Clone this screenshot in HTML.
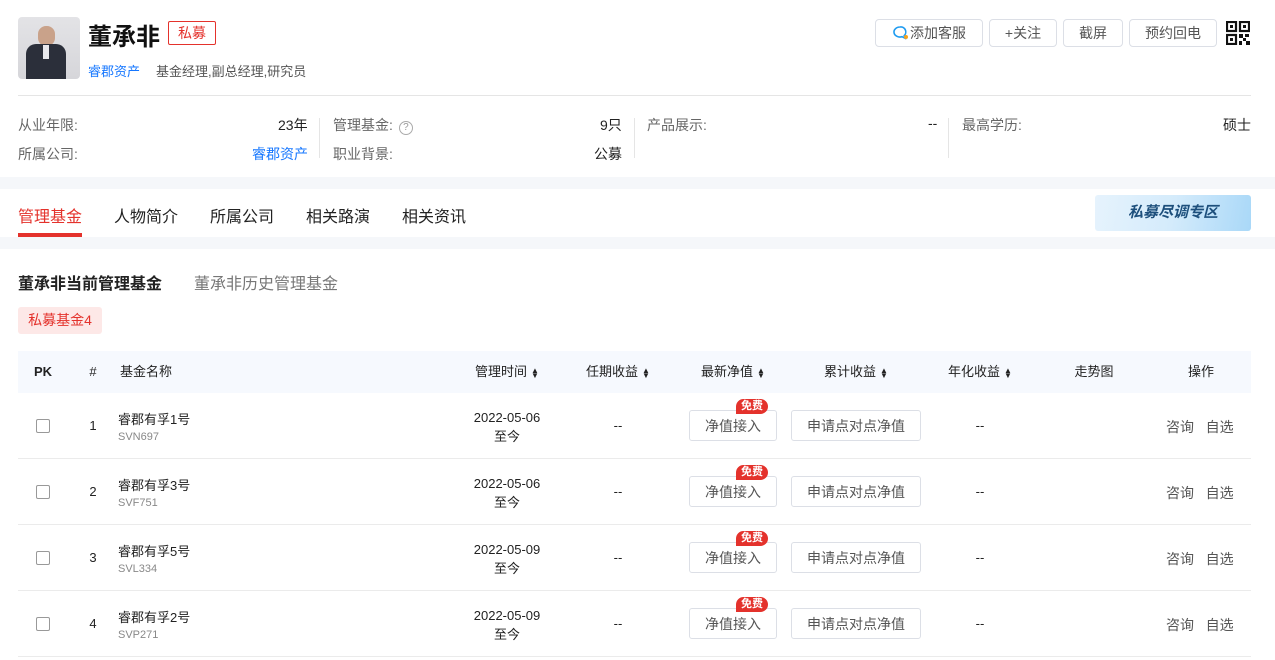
<!DOCTYPE html><html><head><meta charset="utf-8"><style>
*{margin:0;padding:0;box-sizing:border-box}
body{width:1275px;height:660px;overflow:hidden;background:#fff;font-family:"Liberation Sans","Noto Sans CJK SC",sans-serif;color:#333;position:relative}
.a{position:absolute;white-space:nowrap}
.btn{position:absolute;top:19px;height:28px;border:1px solid #dcdfe6;border-radius:4px;font-size:14px;color:#555;display:flex;align-items:center;justify-content:center}
.lbl{font-size:14px;color:#666}
.val{font-size:14px;color:#222}
.vs{position:absolute;width:1px;background:#e5e5e5}
.th{position:absolute;top:351px;height:42px;line-height:42px;font-size:13px;color:#222;transform:translateX(-50%);white-space:nowrap}
.sort{display:inline-block;font-size:8px;line-height:5px;vertical-align:middle;margin-left:4px}
.c{position:absolute;transform:translateX(-50%);white-space:nowrap;font-size:13px;color:#222;text-align:center}
.ob{position:absolute;height:31px;border:1px solid #dcdfe6;border-radius:3px;font-size:14px;color:#555;display:flex;align-items:center;justify-content:center}
.free{position:absolute;background:#e4322c;color:#fff;font-size:11px;font-weight:bold;border-radius:8px 8px 8px 0;height:15px;line-height:15px;padding:0 5px}
</style></head><body>
<div class="a" style="left:18px;top:17px;width:62px;height:62px;border-radius:4px;background:linear-gradient(#e3e3e6,#d6d6da);overflow:hidden">
 <div style="position:absolute;left:20px;top:9px;width:17px;height:20px;border-radius:8px;background:#c9a28a"></div>
 <div style="position:absolute;left:8px;top:27px;width:40px;height:40px;border-radius:10px 10px 0 0;background:#2b2f3a"></div>
 <div style="position:absolute;left:25px;top:28px;width:6px;height:14px;background:#e8e8ec"></div>
</div>
<div class="a" style="left:88px;top:17px;font-size:24px;font-weight:bold;color:#111">董承非</div>
<div class="a" style="left:168px;top:21px;width:48px;height:24px;border:1px solid #e4322c;border-radius:2px;color:#e4322c;font-size:14px;text-align:center;line-height:22px">私募</div>
<div class="a" style="left:88px;top:61px;font-size:13px;color:#1677ff">睿郡资产</div>
<div class="a" style="left:156px;top:61px;font-size:13px;color:#555">基金经理,副总经理,研究员</div>
<div class="btn" style="left:875px;width:108px"><svg width="18" height="16" viewBox="0 0 18 16"><path d="M8 2a6 5 0 1 0 2 9.7l3 1.5-.8-2.6A5 5 0 0 0 8 2z" fill="none" stroke="#1e9bf0" stroke-width="1.6"/><circle cx="14" cy="12" r="2" fill="#f7a21b"/></svg>添加客服</div>
<div class="btn" style="left:989px;width:68px">+关注</div>
<div class="btn" style="left:1063px;width:60px">截屏</div>
<div class="btn" style="left:1129px;width:88px">预约回电</div>
<svg class="a" style="left:1226px;top:21px" width="24" height="24" viewBox="0 0 24 24"><g fill="none" stroke="#111" stroke-width="2.2"><rect x="1" y="1" width="9" height="9"/><rect x="14" y="1" width="9" height="9"/><rect x="1" y="14" width="9" height="9"/></g><g fill="#111"><rect x="4" y="4" width="3" height="3"/><rect x="17" y="4" width="3" height="3"/><rect x="4" y="17" width="3" height="3"/><rect x="13" y="13" width="4" height="4"/><rect x="19" y="13" width="4" height="3"/><rect x="17" y="17" width="3" height="3"/><rect x="13" y="20" width="3" height="4"/><rect x="20" y="20" width="4" height="4"/></g></svg>
<div class="a" style="left:18px;top:95px;width:1233px;height:1px;background:#e5e5e5"></div>
<div class="a lbl" style="left:18px;top:115px">从业年限:</div><div class="a val" style="left:278px;top:115px">23年</div>
<div class="a lbl" style="left:18px;top:144px">所属公司:</div><div class="a val" style="left:252px;top:144px;color:#1677ff">睿郡资产</div>
<div class="vs" style="left:319px;top:118px;height:40px"></div>
<div class="a lbl" style="left:333px;top:115px">管理基金:<span style="display:inline-block;width:14px;height:14px;border:1px solid #aaa;border-radius:50%;font-size:10px;line-height:12px;text-align:center;color:#999;margin-left:6px">?</span></div><div class="a val" style="left:600px;top:115px">9只</div>
<div class="a lbl" style="left:333px;top:144px">职业背景:</div><div class="a val" style="left:594px;top:144px">公募</div>
<div class="vs" style="left:634px;top:118px;height:40px"></div>
<div class="a lbl" style="left:647px;top:115px">产品展示:</div><div class="a val" style="left:928px;top:115px">--</div>
<div class="vs" style="left:948px;top:118px;height:40px"></div>
<div class="a lbl" style="left:962px;top:115px">最高学历:</div><div class="a val" style="left:1223px;top:115px">硕士</div>
<div class="a" style="left:0;top:177px;width:1275px;height:12px;background:#f5f7fa"></div>
<div class="a" style="left:18px;top:203px;font-size:16px;color:#e4322c">管理基金</div>
<div class="a" style="left:18px;top:233px;width:64px;height:4px;background:#e4322c"></div>
<div class="a" style="left:114px;top:203px;font-size:16px;color:#222">人物简介</div>
<div class="a" style="left:210px;top:203px;font-size:16px;color:#222">所属公司</div>
<div class="a" style="left:306px;top:203px;font-size:16px;color:#222">相关路演</div>
<div class="a" style="left:402px;top:203px;font-size:16px;color:#222">相关资讯</div>
<div class="a" style="left:1095px;top:195px;width:156px;height:36px;border-radius:3px;background:linear-gradient(100deg,#e6f3fd 0%,#d4ebfb 50%,#a9d8f8 100%);text-align:center;line-height:36px;font-size:15px;font-weight:bold;font-style:italic;color:#1d4f7c">私募尽调专区</div>
<div class="a" style="left:0;top:237px;width:1275px;height:12px;background:#f5f7fa"></div>
<div class="a" style="left:18px;top:270px;font-size:16px;font-weight:bold;color:#222">董承非当前管理基金</div>
<div class="a" style="left:194px;top:270px;font-size:16px;color:#777">董承非历史管理基金</div>
<div class="a" style="left:18px;top:307px;width:84px;height:27px;background:#fde8e7;border-radius:3px;color:#e4322c;font-size:14px;text-align:center;line-height:27px">私募基金4</div>
<div class="a" style="left:18px;top:351px;width:1233px;height:42px;background:#f6f9fe"></div>
<div class="th" style="left:43px;font-weight:bold">PK</div>
<div class="th" style="left:93px">#</div>
<div class="th" style="left:146px">基金名称</div>
<div class="th" style="left:507px">管理时间<span class="sort">▲<br>▼</span></div>
<div class="th" style="left:618px">任期收益<span class="sort">▲<br>▼</span></div>
<div class="th" style="left:733px">最新净值<span class="sort">▲<br>▼</span></div>
<div class="th" style="left:856px">累计收益<span class="sort">▲<br>▼</span></div>
<div class="th" style="left:980px">年化收益<span class="sort">▲<br>▼</span></div>
<div class="th" style="left:1094px">走势图</div>
<div class="th" style="left:1201px">操作</div>

<div class="a" style="left:0;top:393px">
<div class="a" style="left:36px;top:26px;width:14px;height:14px;border:1px solid #999;border-radius:2px"></div>
<div class="c" style="left:93px;top:25px">1</div>
<div class="a" style="left:118px;top:16px;font-size:13px;color:#222">睿郡有孚1号</div>
<div class="a" style="left:118px;top:38px;font-size:11px;color:#888">SVN697</div>
<div class="c" style="left:507px;top:15px;line-height:19px">2022-05-06<br>至今</div>
<div class="c" style="left:618px;top:25px">--</div>
<div class="ob" style="left:689px;top:17px;width:88px">净值接入</div><div class="free" style="left:736px;top:6px">免费</div>
<div class="ob" style="left:791px;top:17px;width:130px">申请点对点净值</div>
<div class="c" style="left:980px;top:25px">--</div>
<div class="a" style="left:1166px;top:24px;font-size:14px;color:#555">咨询&nbsp;&nbsp;&nbsp;自选</div>
<div class="a" style="left:18px;top:65px;width:1233px;height:1px;background:#ebebeb"></div>
</div>
<div class="a" style="left:0;top:459px">
<div class="a" style="left:36px;top:26px;width:14px;height:14px;border:1px solid #999;border-radius:2px"></div>
<div class="c" style="left:93px;top:25px">2</div>
<div class="a" style="left:118px;top:16px;font-size:13px;color:#222">睿郡有孚3号</div>
<div class="a" style="left:118px;top:38px;font-size:11px;color:#888">SVF751</div>
<div class="c" style="left:507px;top:15px;line-height:19px">2022-05-06<br>至今</div>
<div class="c" style="left:618px;top:25px">--</div>
<div class="ob" style="left:689px;top:17px;width:88px">净值接入</div><div class="free" style="left:736px;top:6px">免费</div>
<div class="ob" style="left:791px;top:17px;width:130px">申请点对点净值</div>
<div class="c" style="left:980px;top:25px">--</div>
<div class="a" style="left:1166px;top:24px;font-size:14px;color:#555">咨询&nbsp;&nbsp;&nbsp;自选</div>
<div class="a" style="left:18px;top:65px;width:1233px;height:1px;background:#ebebeb"></div>
</div>
<div class="a" style="left:0;top:525px">
<div class="a" style="left:36px;top:26px;width:14px;height:14px;border:1px solid #999;border-radius:2px"></div>
<div class="c" style="left:93px;top:25px">3</div>
<div class="a" style="left:118px;top:16px;font-size:13px;color:#222">睿郡有孚5号</div>
<div class="a" style="left:118px;top:38px;font-size:11px;color:#888">SVL334</div>
<div class="c" style="left:507px;top:15px;line-height:19px">2022-05-09<br>至今</div>
<div class="c" style="left:618px;top:25px">--</div>
<div class="ob" style="left:689px;top:17px;width:88px">净值接入</div><div class="free" style="left:736px;top:6px">免费</div>
<div class="ob" style="left:791px;top:17px;width:130px">申请点对点净值</div>
<div class="c" style="left:980px;top:25px">--</div>
<div class="a" style="left:1166px;top:24px;font-size:14px;color:#555">咨询&nbsp;&nbsp;&nbsp;自选</div>
<div class="a" style="left:18px;top:65px;width:1233px;height:1px;background:#ebebeb"></div>
</div>
<div class="a" style="left:0;top:591px">
<div class="a" style="left:36px;top:26px;width:14px;height:14px;border:1px solid #999;border-radius:2px"></div>
<div class="c" style="left:93px;top:25px">4</div>
<div class="a" style="left:118px;top:16px;font-size:13px;color:#222">睿郡有孚2号</div>
<div class="a" style="left:118px;top:38px;font-size:11px;color:#888">SVP271</div>
<div class="c" style="left:507px;top:15px;line-height:19px">2022-05-09<br>至今</div>
<div class="c" style="left:618px;top:25px">--</div>
<div class="ob" style="left:689px;top:17px;width:88px">净值接入</div><div class="free" style="left:736px;top:6px">免费</div>
<div class="ob" style="left:791px;top:17px;width:130px">申请点对点净值</div>
<div class="c" style="left:980px;top:25px">--</div>
<div class="a" style="left:1166px;top:24px;font-size:14px;color:#555">咨询&nbsp;&nbsp;&nbsp;自选</div>
<div class="a" style="left:18px;top:65px;width:1233px;height:1px;background:#ebebeb"></div>
</div>
</body></html>
